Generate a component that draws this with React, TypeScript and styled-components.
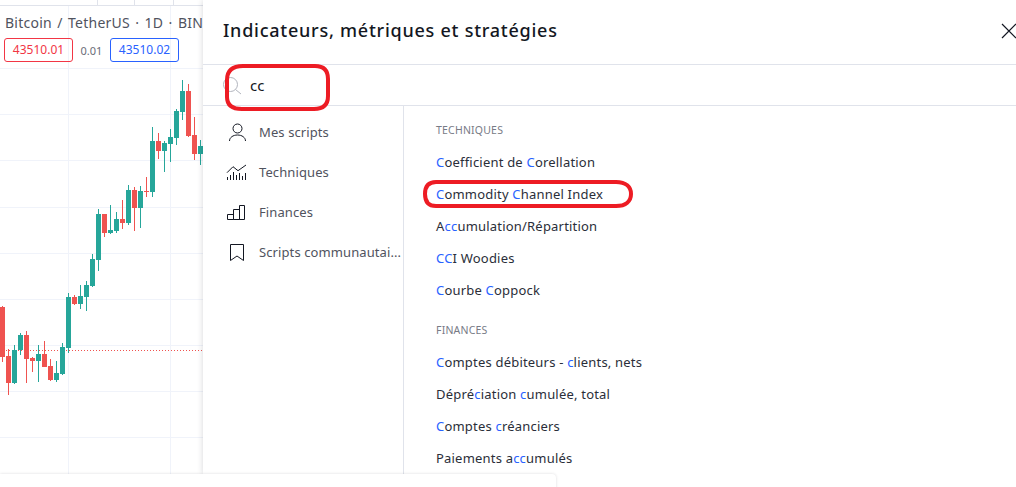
import React from "react";
import styled, { createGlobalStyle } from "styled-components";

const GlobalStyle = createGlobalStyle`
  html, body {
    margin: 0;
    padding: 0;
    background: #fff;
    overflow: hidden;
  }
`;

// x, wick top, wick bottom, body top, body bottom, up
const CANDLES: [number, number, number, number, number, boolean][] = [
  [2.5, 306, 362, 307, 357, false],
  [8.5, 349, 395, 356, 383, false],
  [14.5, 345, 384, 350, 383, true],
  [20.5, 333, 355, 335, 350, true],
  [26.5, 331, 383, 335, 359, false],
  [32.5, 357, 372, 358, 361, false],
  [38.5, 345, 382, 354, 361, true],
  [44.5, 341, 367, 354, 367, false],
  [50.5, 359, 381, 366, 380, false],
  [56.5, 361, 382, 373, 380, true],
  [62.5, 343, 375, 347, 374, true],
  [68.5, 293, 353, 297, 348, true],
  [74.5, 295, 305, 297, 304, false],
  [80.5, 285, 309, 296, 304, true],
  [86.5, 281, 311, 285, 297, true],
  [92.5, 254, 287, 259, 286, true],
  [98.5, 209, 271, 214, 260, true],
  [104.5, 214, 237, 214, 233, false],
  [110.5, 205, 234, 230, 233, true],
  [116.5, 212, 233, 219, 231, true],
  [122.5, 200, 229, 219, 223, false],
  [128.5, 185, 225, 190, 223, true],
  [134.5, 187, 231, 190, 208, false],
  [140.5, 186, 228, 191, 208, true],
  [146.5, 177, 197, 191, 192, false],
  [152.5, 127, 197, 141, 192, true],
  [158.5, 133, 159, 141, 151, false],
  [164.5, 141, 172, 143, 151, true],
  [170.5, 129, 162, 137, 144, true],
  [176.5, 109, 145, 111, 138, true],
  [182.5, 80, 120, 91, 112, true],
  [188.5, 84, 137, 91, 136, false],
  [194.5, 117, 160, 135, 154, false],
  [200.5, 140, 165, 146, 154, true],
];

const GRID_ROWS = [68, 114, 160, 207, 253, 299, 345, 391, 437];
const GRID_COLS = [68, 170];
const TOP_TICKS = [97, 134, 173];

const Page = styled.div`
  position: relative;
  display: flex;
  width: 1016px;
  height: 487px;
  overflow: hidden;
  background: #fff;
  font-family: "Noto Sans", "Liberation Sans", sans-serif;
  color: #2a2e39;
`;

const ChartPane = styled.div`
  position: relative;
  flex: 0 0 203px;
  height: 474px;
  overflow: hidden;
`;

const ChartCanvas = styled.svg`
  display: block;
`;

const Legend = styled.div`
  position: absolute;
  top: 13px;
  left: 5px;
  width: 198px;
`;

const Symbol = styled.div`
  font-size: 14px;
  line-height: 19px;
  color: #50535e;
  white-space: nowrap;
  letter-spacing: 0.25px;
  word-spacing: 1.4px;
`;

const Quotes = styled.div`
  display: flex;
  align-items: center;
  margin: 6px 0 0 -1px;
`;

const Quote = styled.span<{ $tone: string }>`
  box-sizing: border-box;
  height: 24px;
  width: 69px;
  border: 1px solid ${(p) => (p.$tone === "red" ? "#f23645" : "#2962ff")};
  border-radius: 3px;
  color: ${(p) => (p.$tone === "red" ? "#f23645" : "#2962ff")};
  font-size: 12px;
  line-height: 22px;
  text-align: center;
`;

const Spread = styled.span`
  width: 37px;
  text-align: center;
  font-size: 11px;
  color: #6a6d78;
`;

const Modal = styled.div`
  position: relative;
  flex: 1;
  display: flex;
  flex-direction: column;
  height: 474px;
  background: #fff;
  box-shadow: 0 0 6px rgba(30, 34, 45, 0.18);
  clip-path: inset(0 0 0 -10px);
`;

const Header = styled.div`
  box-sizing: border-box;
  height: 65px;
  padding: 17px 0 0 20px;
  border-bottom: 1px solid #e0e3eb;
`;

const Title = styled.h1`
  margin: 0;
  font-size: 18px;
  line-height: 26px;
  font-weight: 500;
  letter-spacing: 0.75px;
  color: #131722;
`;

const CloseIcon = styled.svg`
  position: absolute;
  top: 23px;
  right: -1px;
`;

const SearchRow = styled.div`
  box-sizing: border-box;
  display: flex;
  align-items: center;
  gap: 8px;
  height: 41px;
  padding: 0 0 0 19px;
  border-bottom: 1px solid #e0e3eb;
`;

const SearchText = styled.span`
  font-size: 15px;
  color: #131722;
`;

const Body = styled.div`
  flex: 1;
  display: flex;
  min-height: 0;
`;

const Sidebar = styled.nav`
  box-sizing: border-box;
  flex: 0 0 201px;
  padding-top: 6px;
  border-right: 1px solid #e0e3eb;
`;

const SideItem = styled.div`
  display: flex;
  align-items: center;
  gap: 8px;
  height: 40px;
  padding-left: 20px;
  font-size: 13px;
  letter-spacing: 0.1px;
  color: #50535e;
  white-space: nowrap;
`;

const SideIcon = styled.svg`
  flex: none;
  fill: none;
  stroke: #131722;
  stroke-width: 1;
`;

const Results = styled.div`
  flex: 1;
  padding: 15px 0 0 32px;
`;

const SectionTitle = styled.div`
  height: 18px;
  font-size: 10.5px;
  line-height: 18px;
  letter-spacing: 0.2px;
  color: #787b86;
  text-transform: uppercase;
`;

const ResultList = styled.div`
  margin: 7px 0 15px;
`;

const ResultRow = styled.div`
  height: 32px;
  font-size: 13px;
  line-height: 32px;
  letter-spacing: 0.2px;
  color: #2a2e39;
  white-space: nowrap;
`;

const Hit = styled.span`
  color: #2962ff;
`;

const Scribble = styled.svg`
  position: absolute;
  top: 0;
  left: 0;
  pointer-events: none;
`;

const BottomSheet = styled.div`
  position: absolute;
  left: 0;
  top: 474px;
  width: 556px;
  height: 30px;
  background: #fff;
  border-top-right-radius: 4px;
  box-shadow: 0 0 3px rgba(30, 34, 45, 0.16);
`;

// [x] marks the letters that match the search
function Marked({ text }: { text: string }) {
  const parts = text.split(/(\[[^\]]+\])/);
  return (
    <>
      {parts.map((part, i) =>
        part.startsWith("[") ? <Hit key={i}>{part.slice(1, -1)}</Hit> : <span key={i}>{part}</span>
      )}
    </>
  );
}

function Chart() {
  return (
    <ChartCanvas width={203} height={474}>
      <g stroke="#f0f3fa" strokeWidth={1}>
        {GRID_ROWS.map((y) => (
          <line key={y} x1={0} x2={203} y1={y + 0.5} y2={y + 0.5} />
        ))}
        {GRID_COLS.map((x) => (
          <line key={x} x1={x + 0.5} x2={x + 0.5} y1={5} y2={474} />
        ))}
      </g>
      <line x1={0} x2={203} y1={5.5} y2={5.5} stroke="#e0e3eb" />
      {TOP_TICKS.map((x) => (
        <line key={x} x1={x + 0.5} x2={x + 0.5} y1={0} y2={5} stroke="#e0e3eb" />
      ))}
      <line x1={0} x2={203} y1={350.5} y2={350.5} stroke="#ef5350" strokeDasharray="1 2" />
      {CANDLES.map(([x, wt, wb, bt, bb, up]) => {
        const color = up ? "#26a69a" : "#ef5350";
        return (
          <g key={x} fill={color}>
            <rect x={x - 0.5} y={wt} width={1} height={wb - wt} />
            <rect x={x - 2.5} y={bt} width={5} height={bb - bt} />
          </g>
        );
      })}
    </ChartCanvas>
  );
}

const SIDE_ITEMS = [
  {
    label: "Mes scripts",
    icon: (
      <>
        <circle cx="14.5" cy="10.5" r="4.5" />
        <path d="M6.5 23c0-3.5 3.5-6 8-6s8 2.5 8 6" />
      </>
    ),
  },
  {
    label: "Techniques",
    icon: (
      <>
        <path d="M4 14.7l6-6 5 4 8-5.7" />
        <path d="M4.5 22v-3M7.5 22v-5M10.5 22v-8M13.5 22v-5M16.5 22v-7M19.5 22v-4M22.5 22v-7" />
      </>
    ),
  },
  {
    label: "Finances",
    icon: <path d="M4.5 21.5v-5h6v5zM10.5 21.5v-10h6v10zM16.5 21.5v-14h5v14z" />,
  },
  {
    label: "Scripts communautai...",
    icon: <path d="M7.5 6.5h13v16l-6.5-4.5-6.5 4.5z" />,
  },
];

const SECTIONS = [
  {
    title: "Techniques",
    rows: [
      "[C]oefficient de [C]orellation",
      "[C]ommodity [C]hannel Index",
      "A[cc]umulation/Répartition",
      "[CC]I Woodies",
      "[C]ourbe [C]oppock",
    ],
  },
  {
    title: "Finances",
    rows: [
      "[C]omptes débiteurs - [c]lients, nets",
      "Dépré[c]iation [c]umulée, total",
      "[C]omptes [c]réanciers",
      "Paiements a[cc]umulés",
    ],
  },
];

export default function App() {
  return (
    <Page>
      <GlobalStyle />
      <ChartPane>
        <Chart />
        <Legend>
          <Symbol>Bitcoin / TetherUS · 1D · BIN</Symbol>
          <Quotes>
            <Quote $tone="red">43510.01</Quote>
            <Spread>0.01</Spread>
            <Quote $tone="blue">43510.02</Quote>
          </Quotes>
        </Legend>
      </ChartPane>

      <Modal>
        <Header>
          <Title>Indicateurs, métriques et stratégies</Title>
        </Header>
        <CloseIcon width={16} height={16} viewBox="0 0 16 16" fill="none" stroke="#131722" strokeWidth={1.2}>
          <path d="M1 1l14 14M15 1L1 15" />
        </CloseIcon>

        <SearchRow>
          <svg width={20} height={20} viewBox="0 0 20 20" fill="none" stroke="#b2b5be">
            <circle cx="8.5" cy="9.5" r="7" />
            <path d="M13.5 14.5l5.5 4.5" />
          </svg>
          <SearchText>cc</SearchText>
        </SearchRow>

        <Body>
          <Sidebar>
            {SIDE_ITEMS.map((item) => (
              <SideItem key={item.label}>
                <SideIcon width={28} height={28} viewBox="0 0 28 28">
                  {item.icon}
                </SideIcon>
                {item.label}
              </SideItem>
            ))}
          </Sidebar>
          <Results>
            {SECTIONS.map((section) => (
              <section key={section.title}>
                <SectionTitle>{section.title}</SectionTitle>
                <ResultList>
                  {section.rows.map((row) => (
                    <ResultRow key={row}>
                      <Marked text={row} />
                    </ResultRow>
                  ))}
                </ResultList>
              </section>
            ))}
          </Results>
        </Body>

        <Scribble width={813} height={474} viewBox="203 0 813 474" fill="none" stroke="#ed1c24" strokeWidth={4}>
          <path d="M243 66h72c9 0 13 5 13 13v17c0 9-5 13-14 13h-72c-10 0-15-4-15-12V80c0-9 5-14 16-14z" />
          <path d="M436 182h180c10 0 15 5 15 12s-5 12-15 12H436c-8 0-11-5-11-12s3-12 11-12z" />
        </Scribble>
      </Modal>
      <BottomSheet />
    </Page>
  );
}
